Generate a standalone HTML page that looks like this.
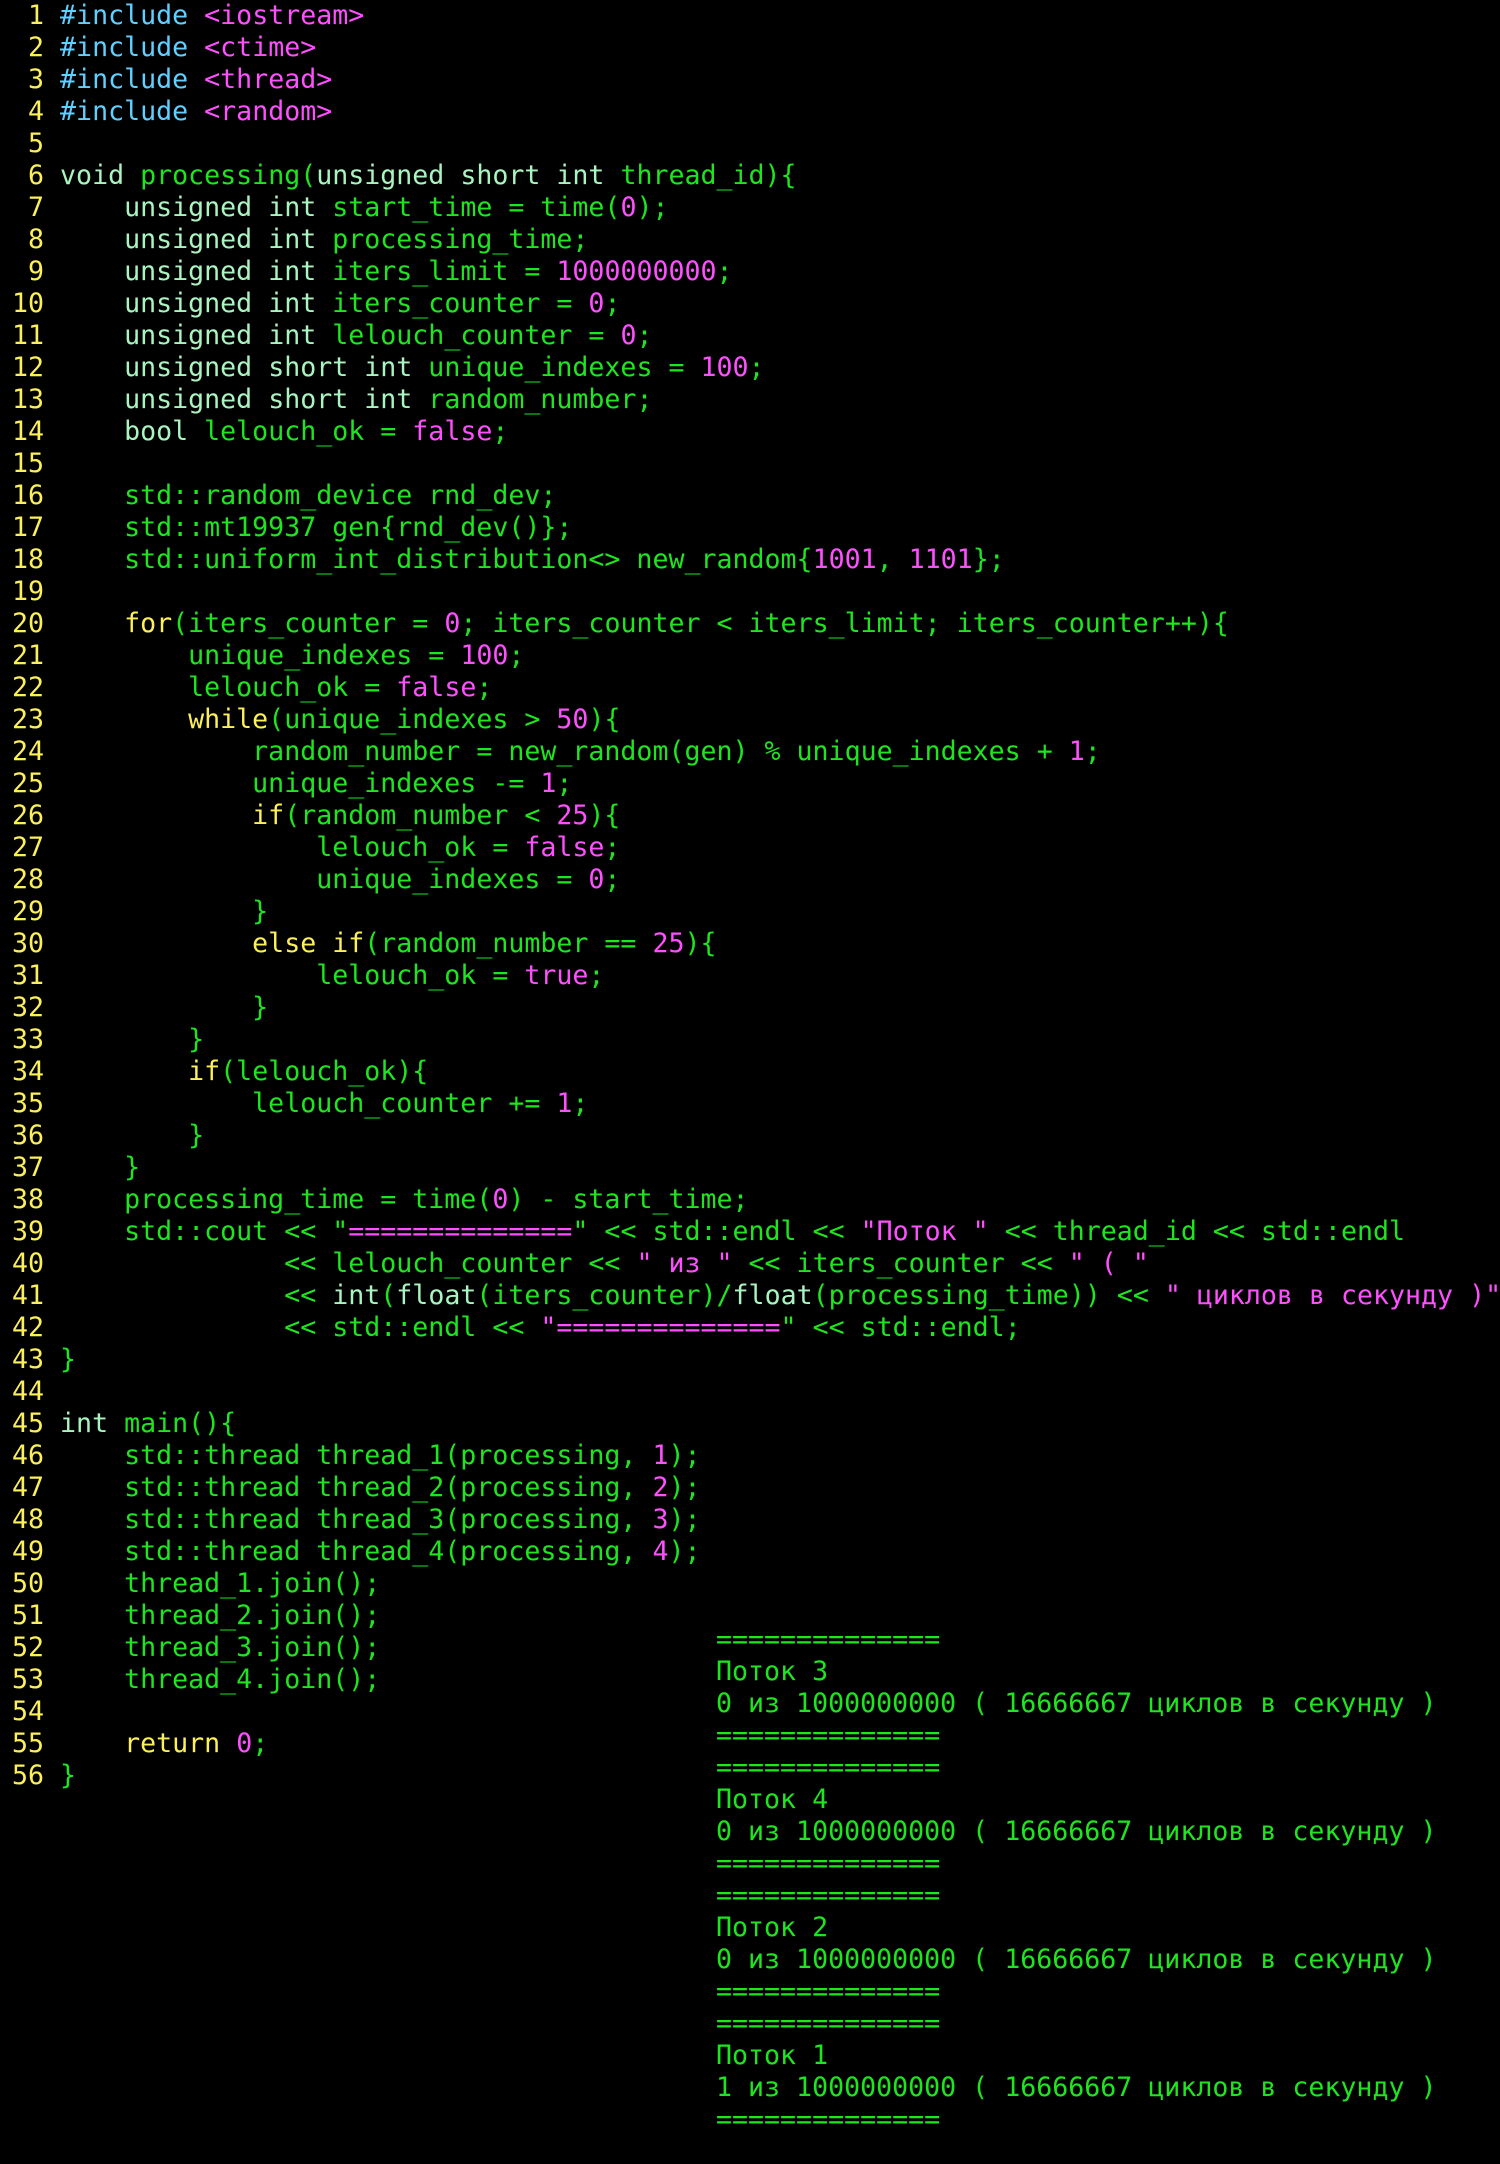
<!DOCTYPE html>
<html><head><meta charset="utf-8"><style>
html,body{margin:0;padding:0;background:#000;width:1500px;height:2164px;overflow:hidden;}
pre{margin:0;position:absolute;top:0;left:12px;font-family:"DejaVu Sans Mono","Liberation Mono",monospace;font-size:26.6px;line-height:32px;color:#1ee61e;white-space:pre;}
.n{color:#fcf05a}.t{color:#a8f5c0}.m{color:#ff50ff}.y{color:#fcf05a}.c{color:#5fd0ff}
#out{left:716px;top:1624px;color:#1ee61e;}
</style></head><body>
<pre><span class="n"> 1</span> <span class="c">#include</span> <span class="m">&lt;iostream&gt;</span>
<span class="n"> 2</span> <span class="c">#include</span> <span class="m">&lt;ctime&gt;</span>
<span class="n"> 3</span> <span class="c">#include</span> <span class="m">&lt;thread&gt;</span>
<span class="n"> 4</span> <span class="c">#include</span> <span class="m">&lt;random&gt;</span>
<span class="n"> 5</span>
<span class="n"> 6</span> <span class="t">void</span> processing(<span class="t">unsigned short int</span> thread_id){
<span class="n"> 7</span>     <span class="t">unsigned int</span> start_time = time(<span class="m">0</span>);
<span class="n"> 8</span>     <span class="t">unsigned int</span> processing_time;
<span class="n"> 9</span>     <span class="t">unsigned int</span> iters_limit = <span class="m">1000000000</span>;
<span class="n">10</span>     <span class="t">unsigned int</span> iters_counter = <span class="m">0</span>;
<span class="n">11</span>     <span class="t">unsigned int</span> lelouch_counter = <span class="m">0</span>;
<span class="n">12</span>     <span class="t">unsigned short int</span> unique_indexes = <span class="m">100</span>;
<span class="n">13</span>     <span class="t">unsigned short int</span> random_number;
<span class="n">14</span>     <span class="t">bool</span> lelouch_ok = <span class="m">false</span>;
<span class="n">15</span>
<span class="n">16</span>     std::random_device rnd_dev;
<span class="n">17</span>     std::mt19937 gen{rnd_dev()};
<span class="n">18</span>     std::uniform_int_distribution&lt;&gt; new_random{<span class="m">1001</span>, <span class="m">1101</span>};
<span class="n">19</span>
<span class="n">20</span>     <span class="y">for</span>(iters_counter = <span class="m">0</span>; iters_counter &lt; iters_limit; iters_counter++){
<span class="n">21</span>         unique_indexes = <span class="m">100</span>;
<span class="n">22</span>         lelouch_ok = <span class="m">false</span>;
<span class="n">23</span>         <span class="y">while</span>(unique_indexes &gt; <span class="m">50</span>){
<span class="n">24</span>             random_number = new_random(gen) % unique_indexes + <span class="m">1</span>;
<span class="n">25</span>             unique_indexes -= <span class="m">1</span>;
<span class="n">26</span>             <span class="y">if</span>(random_number &lt; <span class="m">25</span>){
<span class="n">27</span>                 lelouch_ok = <span class="m">false</span>;
<span class="n">28</span>                 unique_indexes = <span class="m">0</span>;
<span class="n">29</span>             }
<span class="n">30</span>             <span class="y">else if</span>(random_number == <span class="m">25</span>){
<span class="n">31</span>                 lelouch_ok = <span class="m">true</span>;
<span class="n">32</span>             }
<span class="n">33</span>         }
<span class="n">34</span>         <span class="y">if</span>(lelouch_ok){
<span class="n">35</span>             lelouch_counter += <span class="m">1</span>;
<span class="n">36</span>         }
<span class="n">37</span>     }
<span class="n">38</span>     processing_time = time(<span class="m">0</span>) - start_time;
<span class="n">39</span>     std::cout &lt;&lt; "<span class="m">==============</span>" &lt;&lt; std::endl &lt;&lt; <span class="m">"Поток "</span> &lt;&lt; thread_id &lt;&lt; std::endl
<span class="n">40</span>               &lt;&lt; lelouch_counter &lt;&lt; <span class="m">" из "</span> &lt;&lt; iters_counter &lt;&lt; <span class="m">" ( "</span>
<span class="n">41</span>               &lt;&lt; <span class="t">int</span>(<span class="t">float</span>(iters_counter)/<span class="t">float</span>(processing_time)) &lt;&lt; <span class="m">" циклов в секунду )"</span>
<span class="n">42</span>               &lt;&lt; std::endl &lt;&lt; <span class="m">"==============</span>" &lt;&lt; std::endl;
<span class="n">43</span> }
<span class="n">44</span>
<span class="n">45</span> <span class="t">int</span> main(){
<span class="n">46</span>     std::thread thread_1(processing, <span class="m">1</span>);
<span class="n">47</span>     std::thread thread_2(processing, <span class="m">2</span>);
<span class="n">48</span>     std::thread thread_3(processing, <span class="m">3</span>);
<span class="n">49</span>     std::thread thread_4(processing, <span class="m">4</span>);
<span class="n">50</span>     thread_1.join();
<span class="n">51</span>     thread_2.join();
<span class="n">52</span>     thread_3.join();
<span class="n">53</span>     thread_4.join();
<span class="n">54</span>
<span class="n">55</span>     <span class="y">return</span> <span class="m">0</span>;
<span class="n">56</span> }</pre>
<pre id="out">==============
Поток 3
0 из 1000000000 ( 16666667 циклов в секунду )
==============
==============
Поток 4
0 из 1000000000 ( 16666667 циклов в секунду )
==============
==============
Поток 2
0 из 1000000000 ( 16666667 циклов в секунду )
==============
==============
Поток 1
1 из 1000000000 ( 16666667 циклов в секунду )
==============</pre>
</body></html>
